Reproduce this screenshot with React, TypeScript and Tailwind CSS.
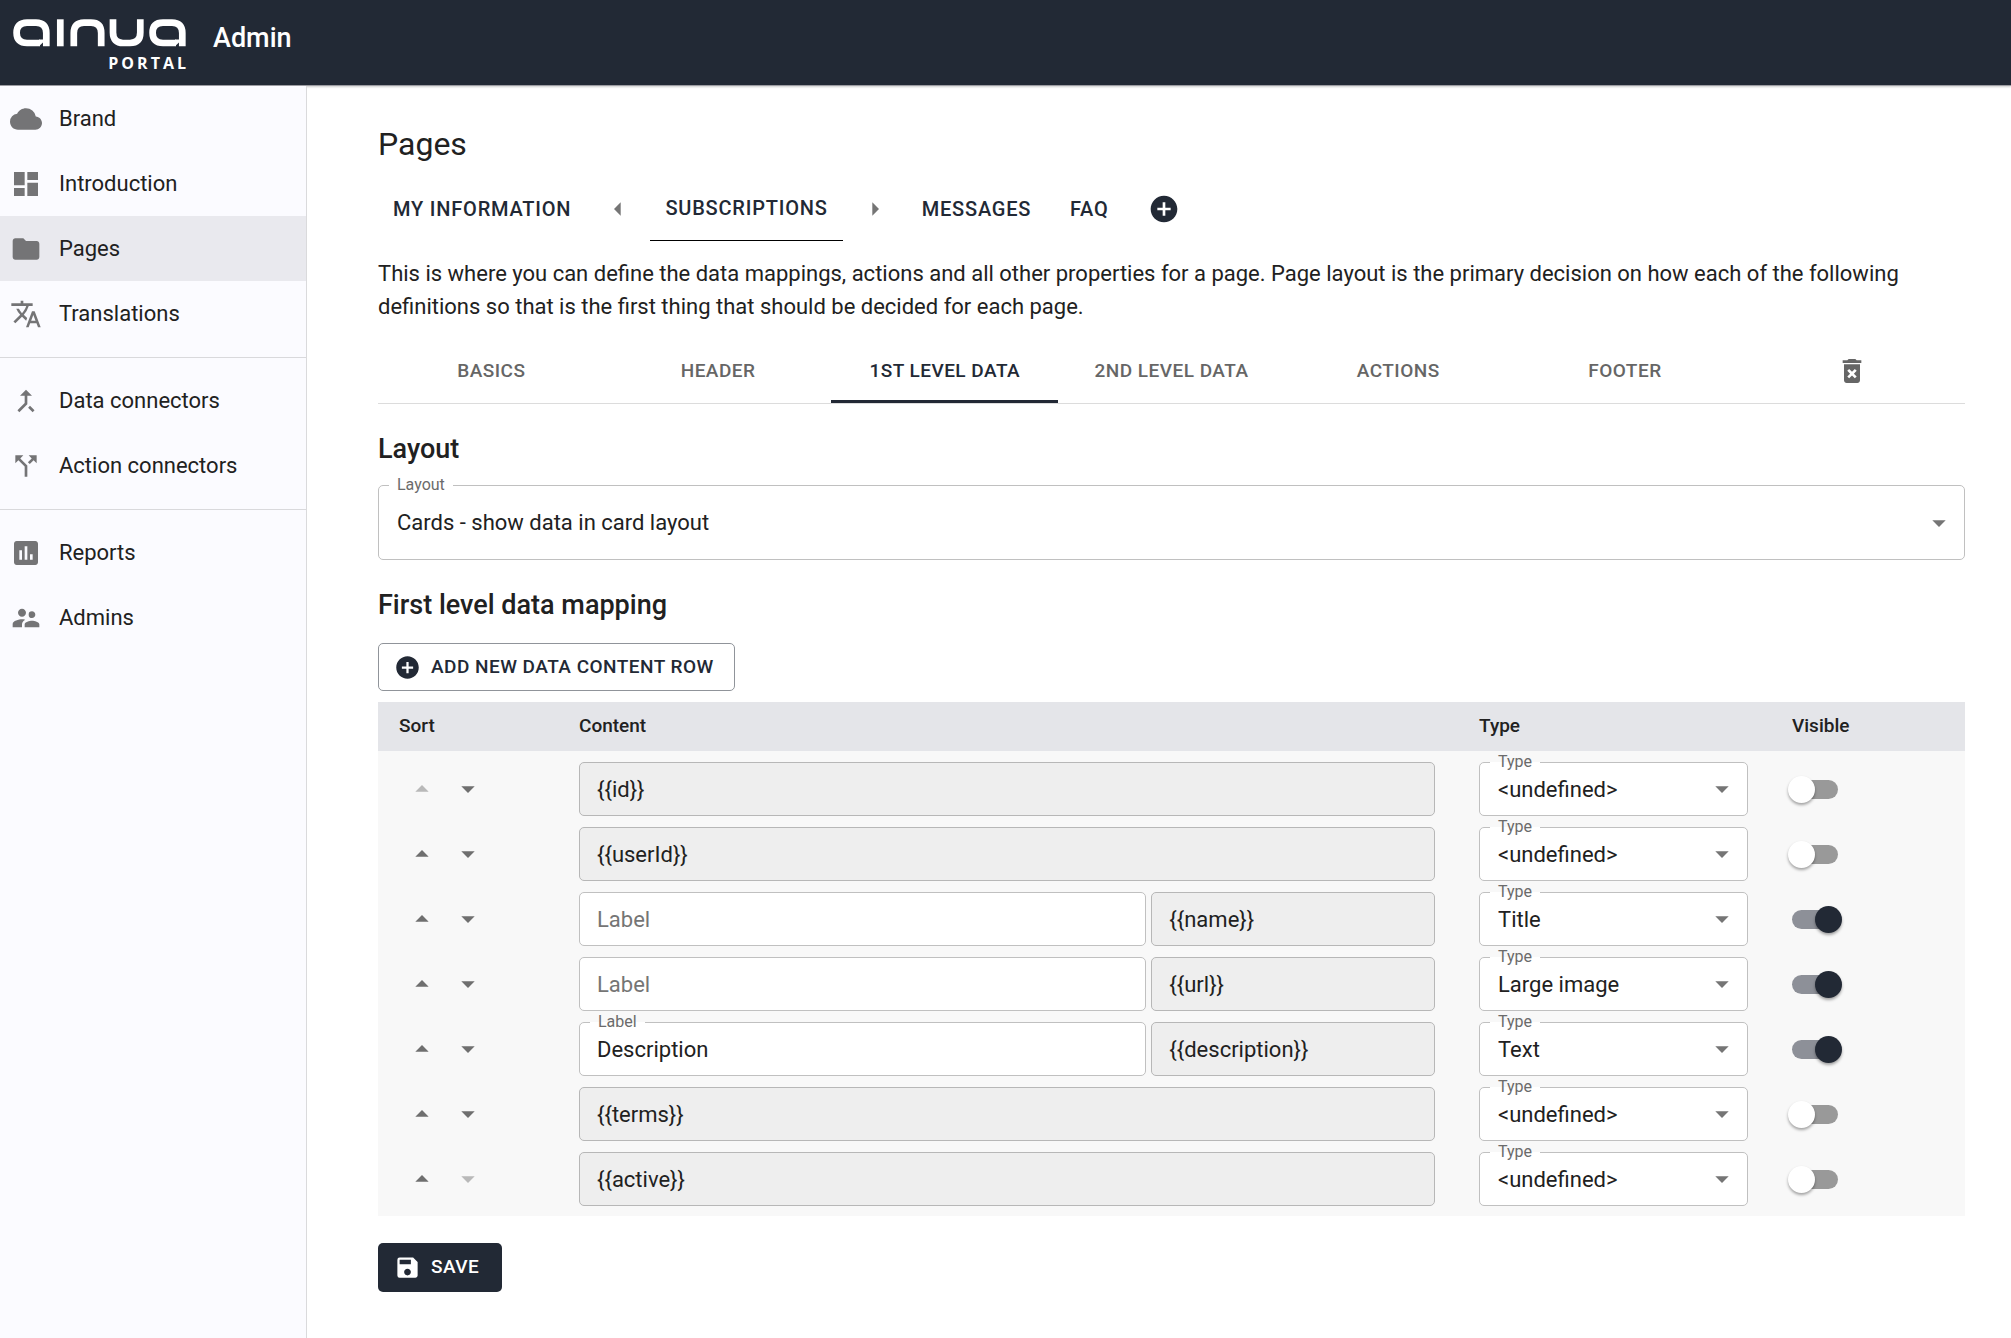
import { useId, type ReactNode } from "react";
import type { IconType } from "react-icons";
import {
  MdAddCircle,
  MdArrowDropDown,
  MdArrowDropUp,
  MdArrowLeft,
  MdArrowRight,
  MdAssessment,
  MdCallMerge,
  MdCallSplit,
  MdCloud,
  MdDashboard,
  MdDeleteForever,
  MdFolder,
  MdSave,
  MdSupervisorAccount,
  MdTranslate,
} from "react-icons/md";

type NavItem = { label: string; icon: IconType; active?: boolean };

const navGroups: NavItem[][] = [
  [
    { label: "Brand", icon: MdCloud },
    { label: "Introduction", icon: MdDashboard },
    { label: "Pages", icon: MdFolder, active: true },
    { label: "Translations", icon: MdTranslate },
  ],
  [
    { label: "Data connectors", icon: MdCallMerge },
    { label: "Action connectors", icon: MdCallSplit },
  ],
  [
    { label: "Reports", icon: MdAssessment },
    { label: "Admins", icon: MdSupervisorAccount },
  ],
];

type Row = { content: string; label?: string; type: string; visible: boolean };

const rows: Row[] = [
  { content: "{{id}}", type: "<undefined>", visible: false },
  { content: "{{userId}}", type: "<undefined>", visible: false },
  { content: "{{name}}", label: "", type: "Title", visible: true },
  { content: "{{url}}", label: "", type: "Large image", visible: true },
  { content: "{{description}}", label: "Description", type: "Text", visible: true },
  { content: "{{terms}}", type: "<undefined>", visible: false },
  { content: "{{active}}", type: "<undefined>", visible: false },
];

const typeOptions = ["<undefined>", "Title", "Large image", "Text"];

const sectionTabs = ["Basics", "Header", "1st level data", "2nd level data", "Actions", "Footer"];

function Logo() {
  return (
    <div className="flex w-[174px] flex-col">
      <svg viewBox="0 0 174 28" className="h-7 w-full" fill="none" stroke="#fff" strokeWidth="6.7" aria-label="ainua" role="img">
        <path d="M34.3 27.3V14Q34.3 3.6 24 3.6H15Q4.6 3.6 4.6 13.8T15 24H28" />
        <path d="M27 20.6H32V22.5L27 27.3Z" fill="#fff" stroke="none" />
        <path d="M48.3 .3V27.3" />
        <path d="M61.8 27.3V14Q61.8 3.6 72 3.6H79Q89.2 3.6 89.2 14V27.3" />
        <path d="M101 .3V13.6Q101 24 111 24H118Q128.300 24 128.300 13.6V.3" />
        <path d="M170.300 27.3V14Q170.300 3.6 160 3.6H151Q140.600 3.6 140.600 13.8T151 24H164" />
        <path d="M163 20.6H168V22.5L163 27.3Z" fill="#fff" stroke="none" />
      </svg>
      <span className="mt-1.5 -mr-[3px] self-end font-['Open_Sans'] text-base leading-5 font-bold tracking-[3px]">PORTAL</span>
    </div>
  );
}

function Sidebar() {
  return (
    <nav className="w-[307px] shrink-0 border-r border-[#dadadc] bg-[#fbfbff]">
      {navGroups.map((group, i) => (
        <ul key={i} className={i === 0 ? "pb-[11px]" : "border-t border-[#d9d9dc] pt-[10px] pb-[11px]"}>
          {group.map(({ label, icon: Icon, active }) => (
            <li key={label}>
              <a
                href="#"
                aria-current={active ? "page" : undefined}
                className={`flex h-[65px] items-center gap-[17px] pl-[10px] text-[22px] ${active ? "bg-[#e9e9ee]" : ""}`}
              >
                <Icon className="size-8 text-[#747476]" />
                {label}
              </a>
            </li>
          ))}
        </ul>
      ))}
    </nav>
  );
}

function FloatingLabel({ htmlFor, children }: { htmlFor: string; children: ReactNode }) {
  return (
    <label
      htmlFor={htmlFor}
      className="absolute -top-2.5 left-[11px] bg-linear-to-b from-transparent from-50% to-white to-50% px-2 text-base leading-5 text-[#6b6b6b]"
    >
      {children}
    </label>
  );
}

function SelectField({ label, value, options, tall }: { label: string; value: string; options: string[]; tall?: boolean }) {
  const id = useId();
  return (
    <div className="relative">
      <select
        id={id}
        defaultValue={value}
        className={`block w-full appearance-none rounded-[5px] border border-[#c0c0c0] bg-white pr-12 pl-[18px] text-[22px] leading-[33px] ${tall ? "h-[75px]" : "h-[54px]"}`}
      >
        {options.map((o) => (
          <option key={o}>{o}</option>
        ))}
      </select>
      <FloatingLabel htmlFor={id}>{label}</FloatingLabel>
      <MdArrowDropDown className="pointer-events-none absolute top-1/2 right-[10px] size-8 -translate-y-1/2 text-[#757575]" />
    </div>
  );
}

function LabelField({ value }: { value: string }) {
  const id = useId();
  return (
    <div className="relative">
      <input
        id={id}
        type="text"
        defaultValue={value}
        placeholder="Label"
        aria-label="Label"
        className="h-[54px] w-full rounded-[5px] border border-[#c0c0c0] bg-white px-[17px] text-[22px] placeholder:text-[#757575]"
      />
      {value && <FloatingLabel htmlFor={id}>Label</FloatingLabel>}
    </div>
  );
}

function PageTab({ children, active }: { children: ReactNode; active?: boolean }) {
  return (
    <button
      type="button"
      className={`h-full min-w-[86px] px-[15px] text-xl font-medium tracking-[0.04em] text-[#222935] uppercase ${active ? "border-b border-black" : ""}`}
    >
      {children}
    </button>
  );
}

function IconButton({ label, icon: Icon, className }: { label: string; icon: IconType; className: string }) {
  return (
    <button type="button" aria-label={label} className={`flex w-16 items-center justify-center ${className}`}>
      <Icon className="size-8" />
    </button>
  );
}

function MappingTable() {
  return (
    <div className="mt-[11px] bg-[#f8f8f8] pb-[10px]">
      <table className="w-full table-fixed">
        <thead>
          <tr className="h-[49px] bg-[#e4e5e9] text-left text-[19px]">
            <th className="w-[179px] px-[21px] font-medium">Sort</th>
            <th className="px-[22px] font-medium">Content</th>
            <th className="w-[313px] px-[22px] font-medium">Type</th>
            <th className="w-[195px] px-[22px] font-medium">Visible</th>
          </tr>
        </thead>
        <tbody>
          {rows.map((row, i) => (
            <tr key={row.content}>
              <td className="px-[21px] pt-[11px]">
                <div className="flex text-[#6f6f6f]">
                  <button type="button" aria-label="Move up" disabled={i === 0} className="flex size-[46px] items-center justify-center disabled:text-[#b9b9b9]">
                    <MdArrowDropUp className="size-8" />
                  </button>
                  <button type="button" aria-label="Move down" disabled={i === rows.length - 1} className="flex size-[46px] items-center justify-center disabled:text-[#b9b9b9]">
                    <MdArrowDropDown className="size-8" />
                  </button>
                </div>
              </td>
              <td className="px-[22px] pt-[11px]">
                <div className={`grid gap-[5px] ${row.label === undefined ? "grid-cols-1" : "grid-cols-[2fr_1fr]"}`}>
                  {row.label !== undefined && <LabelField value={row.label} />}
                  <input
                    type="text"
                    readOnly
                    value={row.content}
                    aria-label="Content"
                    className="h-[54px] w-full min-w-0 rounded-[5px] border border-[#b7b7b7] bg-[#eeeeee] px-[17px] text-[22px]"
                  />
                </div>
              </td>
              <td className="px-[22px] pt-[11px]">
                <SelectField label="Type" value={row.type} options={typeOptions} />
              </td>
              <td className="px-[22px] pt-[11px]">
                <input
                  type="checkbox"
                  role="switch"
                  defaultChecked={row.visible}
                  aria-label="Visible"
                  className="relative block h-[19px] w-[46px] appearance-none rounded-full bg-[#999999] before:absolute before:-top-1 before:-left-1 before:size-[27px] before:rounded-full before:bg-white before:shadow-[0_2px_3px_rgba(0,0,0,0.35)] checked:bg-[#8d9098] checked:before:left-[23px] checked:before:bg-[#222935]"
                />
              </td>
            </tr>
          ))}
        </tbody>
      </table>
    </div>
  );
}

export default function App() {
  return (
    <div className="flex min-h-screen flex-col bg-white font-[Roboto,sans-serif] text-[#212121]">
      <header className="flex h-[86px] shrink-0 items-start gap-[27px] border-b border-[#9c9ca2] bg-[#222935] pt-[19px] pl-3 text-white shadow-[0_1px_2px_rgba(0,0,0,0.2)]">
        <Logo />
        <span className="text-[27px] leading-[38px] font-medium">Admin</span>
      </header>
      <div className="flex flex-1">
        <Sidebar />
        <main className="min-w-0 flex-1 pt-[37px] pr-[46px] pb-10 pl-[71px]">
          <h1 className="text-[32px] leading-[43px]">Pages</h1>
          <div className="mt-[10px] flex h-[65px]">
            <PageTab>My information</PageTab>
            <IconButton label="Move page left" icon={MdArrowLeft} className="text-[#757575]" />
            <PageTab active>Subscriptions</PageTab>
            <IconButton label="Move page right" icon={MdArrowRight} className="text-[#757575]" />
            <PageTab>Messages</PageTab>
            <PageTab>FAQ</PageTab>
            <IconButton label="Add page" icon={MdAddCircle} className="text-[#222935]" />
          </div>
          <p className="mt-4 text-[22px] leading-[33px]">
            This is where you can define the data mappings, actions and all other properties for a page. Page layout is the
            primary decision on how each of the following definitions so that is the first thing that should be decided for
            each page.
          </p>
          <div className="mt-[15px] grid grid-cols-7 border-b border-[#dcdcdc]">
            {sectionTabs.map((tab) => {
              const active = tab === "1st level data";
              return (
                <button
                  key={tab}
                  type="button"
                  className={`h-[65px] border-b-3 pt-[5px] text-[19px] font-medium tracking-wide uppercase ${active ? "border-[#222935] text-[#222935]" : "border-transparent text-[#666666]"}`}
                >
                  {tab}
                </button>
              );
            })}
            <button type="button" aria-label="Delete page" className="flex items-center justify-center text-[#666666]">
              <MdDeleteForever className="size-8" />
            </button>
          </div>

          <h2 className="mt-6 mb-[14px] text-[27px] leading-[43px] font-medium">Layout</h2>
          <SelectField
            label="Layout"
            value="Cards - show data in card layout"
            options={["Cards - show data in card layout", "Table - show data in table layout"]}
            tall
          />

          <h2 className="mt-6 mb-4 text-[27px] leading-[43px] font-medium">First level data mapping</h2>
          <button
            type="button"
            className="flex h-12 items-center gap-[10px] rounded-[5px] border border-[#90949a] pr-5 pl-[15px] text-[19px] font-medium tracking-wide text-[#222935] uppercase"
          >
            <MdAddCircle className="size-[27px]" />
            Add new data content row
          </button>
          <MappingTable />
          <button
            type="button"
            className="mt-[27px] flex h-[49px] items-center gap-[10px] rounded-[5px] bg-[#222935] pr-[23px] pl-4 text-[19px] font-medium tracking-wide text-white uppercase"
          >
            <MdSave className="size-[27px]" />
            Save
          </button>
        </main>
      </div>
    </div>
  );
}
